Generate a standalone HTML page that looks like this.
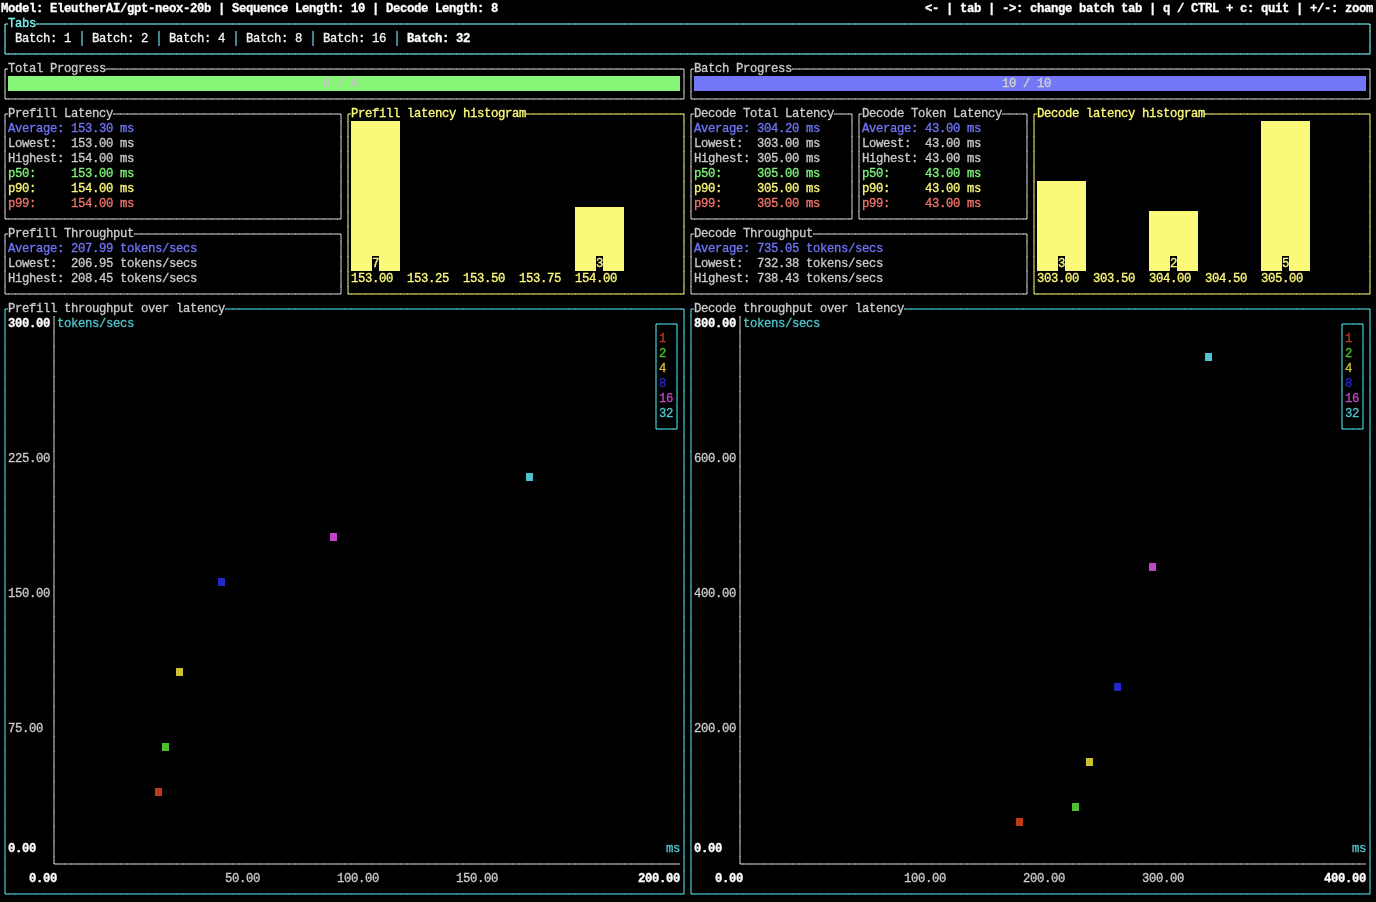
<!DOCTYPE html>
<html lang="en"><head><meta charset="utf-8"><title>text-generation-benchmark</title><style>
html,body{margin:0;padding:0;background:#000;}
body{width:1376px;height:902px;overflow:hidden;position:relative;font-family:"Liberation Mono",monospace;}
#s{position:absolute;left:0;top:0;width:1376px;height:902px;overflow:hidden;will-change:transform;}
.t{position:absolute;display:block;height:15px;line-height:15px;font-size:12.25px;white-space:pre;letter-spacing:-0.35px;font-weight:400;font-family:"Liberation Mono",monospace;-webkit-text-stroke:0.32px currentColor;}
.t.b{font-weight:700;-webkit-text-stroke:0.3px currentColor;}
i{position:absolute;display:block;}
</style></head><body><div id="s">
<span class="t b" style="left:1px;top:2px;color:#ffffff;">Model: EleutherAI/gpt-neox-20b | Sequence Length: 10 | Decode Length: 8</span>
<span class="t b" style="left:925px;top:2px;color:#ffffff;">&lt;- | tab | -&gt;: change batch tab | q / CTRL + c: quit | +/-: zoom</span>
<i style="left:36px;top:23px;width:1333px;height:2px;background:repeating-linear-gradient(90deg,#58a2a7 0,#58a2a7 1px,#40858a 1px,#40858a 7px);background-position:0px 0;background-size:7px 2px;"></i>
<i style="left:6px;top:23px;width:2px;height:2px;background:#40858a;"></i>
<i style="left:6px;top:53px;width:1363px;height:2px;background:repeating-linear-gradient(90deg,#58a2a7 0,#58a2a7 1px,#40858a 1px,#40858a 7px);background-position:-5px 0;background-size:7px 2px;"></i>
<i style="left:4px;top:25px;width:2px;height:28px;background:repeating-linear-gradient(180deg,#58a2a7 0,#58a2a7 1px,#40858a 1px,#40858a 15px);background-position:0 -9px;background-size:2px 15px;"></i>
<i style="left:1369px;top:25px;width:2px;height:28px;background:repeating-linear-gradient(180deg,#58a2a7 0,#58a2a7 1px,#40858a 1px,#40858a 15px);background-position:0 -9px;background-size:2px 15px;"></i>
<i style="left:5px;top:24px;width:1px;height:1px;background:#7fe0e6;"></i>
<i style="left:4px;top:24px;width:1px;height:1px;background:#40858a;"></i>
<i style="left:5px;top:23px;width:1px;height:1px;background:#40858a;"></i>
<i style="left:1369px;top:24px;width:1px;height:1px;background:#7fe0e6;"></i>
<i style="left:1370px;top:24px;width:1px;height:1px;background:#40858a;"></i>
<i style="left:1369px;top:23px;width:1px;height:1px;background:#40858a;"></i>
<i style="left:5px;top:53px;width:1px;height:1px;background:#7fe0e6;"></i>
<i style="left:4px;top:53px;width:1px;height:1px;background:#40858a;"></i>
<i style="left:5px;top:54px;width:1px;height:1px;background:#40858a;"></i>
<i style="left:1369px;top:53px;width:1px;height:1px;background:#7fe0e6;"></i>
<i style="left:1370px;top:53px;width:1px;height:1px;background:#40858a;"></i>
<i style="left:1369px;top:54px;width:1px;height:1px;background:#40858a;"></i>
<span class="t" style="left:8px;top:17px;color:#7ff5f8;">Tabs</span>
<span class="t" style="left:15px;top:32px;color:#f2f2f2;">Batch: 1</span>
<i style="left:81px;top:31px;width:2px;height:15px;background:repeating-linear-gradient(180deg,#40858a 0,#40858a 1px,#40858a 1px,#40858a 15px);background-position:0 0px;background-size:2px 15px;"></i>
<span class="t" style="left:92px;top:32px;color:#f2f2f2;">Batch: 2</span>
<i style="left:158px;top:31px;width:2px;height:15px;background:repeating-linear-gradient(180deg,#40858a 0,#40858a 1px,#40858a 1px,#40858a 15px);background-position:0 0px;background-size:2px 15px;"></i>
<span class="t" style="left:169px;top:32px;color:#f2f2f2;">Batch: 4</span>
<i style="left:235px;top:31px;width:2px;height:15px;background:repeating-linear-gradient(180deg,#40858a 0,#40858a 1px,#40858a 1px,#40858a 15px);background-position:0 0px;background-size:2px 15px;"></i>
<span class="t" style="left:246px;top:32px;color:#f2f2f2;">Batch: 8</span>
<i style="left:312px;top:31px;width:2px;height:15px;background:repeating-linear-gradient(180deg,#40858a 0,#40858a 1px,#40858a 1px,#40858a 15px);background-position:0 0px;background-size:2px 15px;"></i>
<span class="t" style="left:323px;top:32px;color:#f2f2f2;">Batch: 16</span>
<i style="left:396px;top:31px;width:2px;height:15px;background:repeating-linear-gradient(180deg,#40858a 0,#40858a 1px,#40858a 1px,#40858a 15px);background-position:0 0px;background-size:2px 15px;"></i>
<span class="t b" style="left:407px;top:32px;color:#ffffff;">Batch: 32</span>
<i style="left:106px;top:68px;width:577px;height:2px;background:repeating-linear-gradient(90deg,#8e8e8e 0,#8e8e8e 1px,#6a6a6a 1px,#6a6a6a 7px);background-position:0px 0;background-size:7px 2px;"></i>
<i style="left:6px;top:68px;width:2px;height:2px;background:#6a6a6a;"></i>
<i style="left:6px;top:98px;width:677px;height:2px;background:repeating-linear-gradient(90deg,#8e8e8e 0,#8e8e8e 1px,#6a6a6a 1px,#6a6a6a 7px);background-position:-5px 0;background-size:7px 2px;"></i>
<i style="left:4px;top:70px;width:2px;height:28px;background:repeating-linear-gradient(180deg,#8e8e8e 0,#8e8e8e 1px,#6a6a6a 1px,#6a6a6a 15px);background-position:0 -9px;background-size:2px 15px;"></i>
<i style="left:683px;top:70px;width:2px;height:28px;background:repeating-linear-gradient(180deg,#8e8e8e 0,#8e8e8e 1px,#6a6a6a 1px,#6a6a6a 15px);background-position:0 -9px;background-size:2px 15px;"></i>
<i style="left:5px;top:69px;width:1px;height:1px;background:#cfcfcf;"></i>
<i style="left:4px;top:69px;width:1px;height:1px;background:#6a6a6a;"></i>
<i style="left:5px;top:68px;width:1px;height:1px;background:#6a6a6a;"></i>
<i style="left:683px;top:69px;width:1px;height:1px;background:#cfcfcf;"></i>
<i style="left:684px;top:69px;width:1px;height:1px;background:#6a6a6a;"></i>
<i style="left:683px;top:68px;width:1px;height:1px;background:#6a6a6a;"></i>
<i style="left:5px;top:98px;width:1px;height:1px;background:#cfcfcf;"></i>
<i style="left:4px;top:98px;width:1px;height:1px;background:#6a6a6a;"></i>
<i style="left:5px;top:99px;width:1px;height:1px;background:#6a6a6a;"></i>
<i style="left:683px;top:98px;width:1px;height:1px;background:#cfcfcf;"></i>
<i style="left:684px;top:98px;width:1px;height:1px;background:#6a6a6a;"></i>
<i style="left:683px;top:99px;width:1px;height:1px;background:#6a6a6a;"></i>
<span class="t" style="left:8px;top:62px;color:#c9c9c9;">Total Progress</span>
<i style="left:8px;top:76px;width:672px;height:15px;background:#86f578;"></i>
<span class="t" style="left:323px;top:77px;color:#c4c4c4;">6 / 6</span>
<i style="left:792px;top:68px;width:577px;height:2px;background:repeating-linear-gradient(90deg,#8e8e8e 0,#8e8e8e 1px,#6a6a6a 1px,#6a6a6a 7px);background-position:0px 0;background-size:7px 2px;"></i>
<i style="left:692px;top:68px;width:2px;height:2px;background:#6a6a6a;"></i>
<i style="left:692px;top:98px;width:677px;height:2px;background:repeating-linear-gradient(90deg,#8e8e8e 0,#8e8e8e 1px,#6a6a6a 1px,#6a6a6a 7px);background-position:-5px 0;background-size:7px 2px;"></i>
<i style="left:690px;top:70px;width:2px;height:28px;background:repeating-linear-gradient(180deg,#8e8e8e 0,#8e8e8e 1px,#6a6a6a 1px,#6a6a6a 15px);background-position:0 -9px;background-size:2px 15px;"></i>
<i style="left:1369px;top:70px;width:2px;height:28px;background:repeating-linear-gradient(180deg,#8e8e8e 0,#8e8e8e 1px,#6a6a6a 1px,#6a6a6a 15px);background-position:0 -9px;background-size:2px 15px;"></i>
<i style="left:691px;top:69px;width:1px;height:1px;background:#cfcfcf;"></i>
<i style="left:690px;top:69px;width:1px;height:1px;background:#6a6a6a;"></i>
<i style="left:691px;top:68px;width:1px;height:1px;background:#6a6a6a;"></i>
<i style="left:1369px;top:69px;width:1px;height:1px;background:#cfcfcf;"></i>
<i style="left:1370px;top:69px;width:1px;height:1px;background:#6a6a6a;"></i>
<i style="left:1369px;top:68px;width:1px;height:1px;background:#6a6a6a;"></i>
<i style="left:691px;top:98px;width:1px;height:1px;background:#cfcfcf;"></i>
<i style="left:690px;top:98px;width:1px;height:1px;background:#6a6a6a;"></i>
<i style="left:691px;top:99px;width:1px;height:1px;background:#6a6a6a;"></i>
<i style="left:1369px;top:98px;width:1px;height:1px;background:#cfcfcf;"></i>
<i style="left:1370px;top:98px;width:1px;height:1px;background:#6a6a6a;"></i>
<i style="left:1369px;top:99px;width:1px;height:1px;background:#6a6a6a;"></i>
<span class="t" style="left:694px;top:62px;color:#c9c9c9;">Batch Progress</span>
<i style="left:694px;top:76px;width:672px;height:15px;background:#7276f8;"></i>
<span class="t" style="left:1002px;top:77px;color:#d4d4c4;">10 / 10</span>
<i style="left:113px;top:113px;width:227px;height:2px;background:repeating-linear-gradient(90deg,#8e8e8e 0,#8e8e8e 1px,#6a6a6a 1px,#6a6a6a 7px);background-position:0px 0;background-size:7px 2px;"></i>
<i style="left:6px;top:113px;width:2px;height:2px;background:#6a6a6a;"></i>
<i style="left:6px;top:218px;width:334px;height:2px;background:repeating-linear-gradient(90deg,#8e8e8e 0,#8e8e8e 1px,#6a6a6a 1px,#6a6a6a 7px);background-position:-5px 0;background-size:7px 2px;"></i>
<i style="left:4px;top:115px;width:2px;height:103px;background:repeating-linear-gradient(180deg,#8e8e8e 0,#8e8e8e 1px,#6a6a6a 1px,#6a6a6a 15px);background-position:0 -9px;background-size:2px 15px;"></i>
<i style="left:340px;top:115px;width:2px;height:103px;background:repeating-linear-gradient(180deg,#8e8e8e 0,#8e8e8e 1px,#6a6a6a 1px,#6a6a6a 15px);background-position:0 -9px;background-size:2px 15px;"></i>
<i style="left:5px;top:114px;width:1px;height:1px;background:#cfcfcf;"></i>
<i style="left:4px;top:114px;width:1px;height:1px;background:#6a6a6a;"></i>
<i style="left:5px;top:113px;width:1px;height:1px;background:#6a6a6a;"></i>
<i style="left:340px;top:114px;width:1px;height:1px;background:#cfcfcf;"></i>
<i style="left:341px;top:114px;width:1px;height:1px;background:#6a6a6a;"></i>
<i style="left:340px;top:113px;width:1px;height:1px;background:#6a6a6a;"></i>
<i style="left:5px;top:218px;width:1px;height:1px;background:#cfcfcf;"></i>
<i style="left:4px;top:218px;width:1px;height:1px;background:#6a6a6a;"></i>
<i style="left:5px;top:219px;width:1px;height:1px;background:#6a6a6a;"></i>
<i style="left:340px;top:218px;width:1px;height:1px;background:#cfcfcf;"></i>
<i style="left:341px;top:218px;width:1px;height:1px;background:#6a6a6a;"></i>
<i style="left:340px;top:219px;width:1px;height:1px;background:#6a6a6a;"></i>
<span class="t" style="left:8px;top:107px;color:#c9c9c9;">Prefill Latency</span>
<span class="t" style="left:8px;top:122px;color:#6f74f6;">Average: 153.30 ms</span>
<span class="t" style="left:8px;top:137px;color:#c9c9c9;">Lowest:  153.00 ms</span>
<span class="t" style="left:8px;top:152px;color:#c9c9c9;">Highest: 154.00 ms</span>
<span class="t" style="left:8px;top:167px;color:#7df277;">p50:     153.00 ms</span>
<span class="t" style="left:8px;top:182px;color:#f7f577;">p90:     154.00 ms</span>
<span class="t" style="left:8px;top:197px;color:#f0746a;">p99:     154.00 ms</span>
<i style="left:834px;top:113px;width:17px;height:2px;background:repeating-linear-gradient(90deg,#8e8e8e 0,#8e8e8e 1px,#6a6a6a 1px,#6a6a6a 7px);background-position:0px 0;background-size:7px 2px;"></i>
<i style="left:692px;top:113px;width:2px;height:2px;background:#6a6a6a;"></i>
<i style="left:692px;top:218px;width:159px;height:2px;background:repeating-linear-gradient(90deg,#8e8e8e 0,#8e8e8e 1px,#6a6a6a 1px,#6a6a6a 7px);background-position:-5px 0;background-size:7px 2px;"></i>
<i style="left:690px;top:115px;width:2px;height:103px;background:repeating-linear-gradient(180deg,#8e8e8e 0,#8e8e8e 1px,#6a6a6a 1px,#6a6a6a 15px);background-position:0 -9px;background-size:2px 15px;"></i>
<i style="left:851px;top:115px;width:2px;height:103px;background:repeating-linear-gradient(180deg,#8e8e8e 0,#8e8e8e 1px,#6a6a6a 1px,#6a6a6a 15px);background-position:0 -9px;background-size:2px 15px;"></i>
<i style="left:691px;top:114px;width:1px;height:1px;background:#cfcfcf;"></i>
<i style="left:690px;top:114px;width:1px;height:1px;background:#6a6a6a;"></i>
<i style="left:691px;top:113px;width:1px;height:1px;background:#6a6a6a;"></i>
<i style="left:851px;top:114px;width:1px;height:1px;background:#cfcfcf;"></i>
<i style="left:852px;top:114px;width:1px;height:1px;background:#6a6a6a;"></i>
<i style="left:851px;top:113px;width:1px;height:1px;background:#6a6a6a;"></i>
<i style="left:691px;top:218px;width:1px;height:1px;background:#cfcfcf;"></i>
<i style="left:690px;top:218px;width:1px;height:1px;background:#6a6a6a;"></i>
<i style="left:691px;top:219px;width:1px;height:1px;background:#6a6a6a;"></i>
<i style="left:851px;top:218px;width:1px;height:1px;background:#cfcfcf;"></i>
<i style="left:852px;top:218px;width:1px;height:1px;background:#6a6a6a;"></i>
<i style="left:851px;top:219px;width:1px;height:1px;background:#6a6a6a;"></i>
<span class="t" style="left:694px;top:107px;color:#c9c9c9;">Decode Total Latency</span>
<span class="t" style="left:694px;top:122px;color:#6f74f6;">Average: 304.20 ms</span>
<span class="t" style="left:694px;top:137px;color:#c9c9c9;">Lowest:  303.00 ms</span>
<span class="t" style="left:694px;top:152px;color:#c9c9c9;">Highest: 305.00 ms</span>
<span class="t" style="left:694px;top:167px;color:#7df277;">p50:     305.00 ms</span>
<span class="t" style="left:694px;top:182px;color:#f7f577;">p90:     305.00 ms</span>
<span class="t" style="left:694px;top:197px;color:#f0746a;">p99:     305.00 ms</span>
<i style="left:1002px;top:113px;width:24px;height:2px;background:repeating-linear-gradient(90deg,#8e8e8e 0,#8e8e8e 1px,#6a6a6a 1px,#6a6a6a 7px);background-position:0px 0;background-size:7px 2px;"></i>
<i style="left:860px;top:113px;width:2px;height:2px;background:#6a6a6a;"></i>
<i style="left:860px;top:218px;width:166px;height:2px;background:repeating-linear-gradient(90deg,#8e8e8e 0,#8e8e8e 1px,#6a6a6a 1px,#6a6a6a 7px);background-position:-5px 0;background-size:7px 2px;"></i>
<i style="left:858px;top:115px;width:2px;height:103px;background:repeating-linear-gradient(180deg,#8e8e8e 0,#8e8e8e 1px,#6a6a6a 1px,#6a6a6a 15px);background-position:0 -9px;background-size:2px 15px;"></i>
<i style="left:1026px;top:115px;width:2px;height:103px;background:repeating-linear-gradient(180deg,#8e8e8e 0,#8e8e8e 1px,#6a6a6a 1px,#6a6a6a 15px);background-position:0 -9px;background-size:2px 15px;"></i>
<i style="left:859px;top:114px;width:1px;height:1px;background:#cfcfcf;"></i>
<i style="left:858px;top:114px;width:1px;height:1px;background:#6a6a6a;"></i>
<i style="left:859px;top:113px;width:1px;height:1px;background:#6a6a6a;"></i>
<i style="left:1026px;top:114px;width:1px;height:1px;background:#cfcfcf;"></i>
<i style="left:1027px;top:114px;width:1px;height:1px;background:#6a6a6a;"></i>
<i style="left:1026px;top:113px;width:1px;height:1px;background:#6a6a6a;"></i>
<i style="left:859px;top:218px;width:1px;height:1px;background:#cfcfcf;"></i>
<i style="left:858px;top:218px;width:1px;height:1px;background:#6a6a6a;"></i>
<i style="left:859px;top:219px;width:1px;height:1px;background:#6a6a6a;"></i>
<i style="left:1026px;top:218px;width:1px;height:1px;background:#cfcfcf;"></i>
<i style="left:1027px;top:218px;width:1px;height:1px;background:#6a6a6a;"></i>
<i style="left:1026px;top:219px;width:1px;height:1px;background:#6a6a6a;"></i>
<span class="t" style="left:862px;top:107px;color:#c9c9c9;">Decode Token Latency</span>
<span class="t" style="left:862px;top:122px;color:#6f74f6;">Average: 43.00 ms</span>
<span class="t" style="left:862px;top:137px;color:#c9c9c9;">Lowest:  43.00 ms</span>
<span class="t" style="left:862px;top:152px;color:#c9c9c9;">Highest: 43.00 ms</span>
<span class="t" style="left:862px;top:167px;color:#7df277;">p50:     43.00 ms</span>
<span class="t" style="left:862px;top:182px;color:#f7f577;">p90:     43.00 ms</span>
<span class="t" style="left:862px;top:197px;color:#f0746a;">p99:     43.00 ms</span>
<i style="left:134px;top:233px;width:206px;height:2px;background:repeating-linear-gradient(90deg,#8e8e8e 0,#8e8e8e 1px,#6a6a6a 1px,#6a6a6a 7px);background-position:0px 0;background-size:7px 2px;"></i>
<i style="left:6px;top:233px;width:2px;height:2px;background:#6a6a6a;"></i>
<i style="left:6px;top:293px;width:334px;height:2px;background:repeating-linear-gradient(90deg,#8e8e8e 0,#8e8e8e 1px,#6a6a6a 1px,#6a6a6a 7px);background-position:-5px 0;background-size:7px 2px;"></i>
<i style="left:4px;top:235px;width:2px;height:58px;background:repeating-linear-gradient(180deg,#8e8e8e 0,#8e8e8e 1px,#6a6a6a 1px,#6a6a6a 15px);background-position:0 -9px;background-size:2px 15px;"></i>
<i style="left:340px;top:235px;width:2px;height:58px;background:repeating-linear-gradient(180deg,#8e8e8e 0,#8e8e8e 1px,#6a6a6a 1px,#6a6a6a 15px);background-position:0 -9px;background-size:2px 15px;"></i>
<i style="left:5px;top:234px;width:1px;height:1px;background:#cfcfcf;"></i>
<i style="left:4px;top:234px;width:1px;height:1px;background:#6a6a6a;"></i>
<i style="left:5px;top:233px;width:1px;height:1px;background:#6a6a6a;"></i>
<i style="left:340px;top:234px;width:1px;height:1px;background:#cfcfcf;"></i>
<i style="left:341px;top:234px;width:1px;height:1px;background:#6a6a6a;"></i>
<i style="left:340px;top:233px;width:1px;height:1px;background:#6a6a6a;"></i>
<i style="left:5px;top:293px;width:1px;height:1px;background:#cfcfcf;"></i>
<i style="left:4px;top:293px;width:1px;height:1px;background:#6a6a6a;"></i>
<i style="left:5px;top:294px;width:1px;height:1px;background:#6a6a6a;"></i>
<i style="left:340px;top:293px;width:1px;height:1px;background:#cfcfcf;"></i>
<i style="left:341px;top:293px;width:1px;height:1px;background:#6a6a6a;"></i>
<i style="left:340px;top:294px;width:1px;height:1px;background:#6a6a6a;"></i>
<span class="t" style="left:8px;top:227px;color:#c9c9c9;">Prefill Throughput</span>
<span class="t" style="left:8px;top:242px;color:#6f74f6;">Average: 207.99 tokens/secs</span>
<span class="t" style="left:8px;top:257px;color:#c9c9c9;">Lowest:  206.95 tokens/secs</span>
<span class="t" style="left:8px;top:272px;color:#c9c9c9;">Highest: 208.45 tokens/secs</span>
<i style="left:813px;top:233px;width:213px;height:2px;background:repeating-linear-gradient(90deg,#8e8e8e 0,#8e8e8e 1px,#6a6a6a 1px,#6a6a6a 7px);background-position:0px 0;background-size:7px 2px;"></i>
<i style="left:692px;top:233px;width:2px;height:2px;background:#6a6a6a;"></i>
<i style="left:692px;top:293px;width:334px;height:2px;background:repeating-linear-gradient(90deg,#8e8e8e 0,#8e8e8e 1px,#6a6a6a 1px,#6a6a6a 7px);background-position:-5px 0;background-size:7px 2px;"></i>
<i style="left:690px;top:235px;width:2px;height:58px;background:repeating-linear-gradient(180deg,#8e8e8e 0,#8e8e8e 1px,#6a6a6a 1px,#6a6a6a 15px);background-position:0 -9px;background-size:2px 15px;"></i>
<i style="left:1026px;top:235px;width:2px;height:58px;background:repeating-linear-gradient(180deg,#8e8e8e 0,#8e8e8e 1px,#6a6a6a 1px,#6a6a6a 15px);background-position:0 -9px;background-size:2px 15px;"></i>
<i style="left:691px;top:234px;width:1px;height:1px;background:#cfcfcf;"></i>
<i style="left:690px;top:234px;width:1px;height:1px;background:#6a6a6a;"></i>
<i style="left:691px;top:233px;width:1px;height:1px;background:#6a6a6a;"></i>
<i style="left:1026px;top:234px;width:1px;height:1px;background:#cfcfcf;"></i>
<i style="left:1027px;top:234px;width:1px;height:1px;background:#6a6a6a;"></i>
<i style="left:1026px;top:233px;width:1px;height:1px;background:#6a6a6a;"></i>
<i style="left:691px;top:293px;width:1px;height:1px;background:#cfcfcf;"></i>
<i style="left:690px;top:293px;width:1px;height:1px;background:#6a6a6a;"></i>
<i style="left:691px;top:294px;width:1px;height:1px;background:#6a6a6a;"></i>
<i style="left:1026px;top:293px;width:1px;height:1px;background:#cfcfcf;"></i>
<i style="left:1027px;top:293px;width:1px;height:1px;background:#6a6a6a;"></i>
<i style="left:1026px;top:294px;width:1px;height:1px;background:#6a6a6a;"></i>
<span class="t" style="left:694px;top:227px;color:#c9c9c9;">Decode Throughput</span>
<span class="t" style="left:694px;top:242px;color:#6f74f6;">Average: 735.05 tokens/secs</span>
<span class="t" style="left:694px;top:257px;color:#c9c9c9;">Lowest:  732.38 tokens/secs</span>
<span class="t" style="left:694px;top:272px;color:#c9c9c9;">Highest: 738.43 tokens/secs</span>
<i style="left:526px;top:113px;width:157px;height:2px;background:repeating-linear-gradient(90deg,#a3a148 0,#a3a148 1px,#7f7e38 1px,#7f7e38 7px);background-position:0px 0;background-size:7px 2px;"></i>
<i style="left:349px;top:113px;width:2px;height:2px;background:#7f7e38;"></i>
<i style="left:349px;top:293px;width:334px;height:2px;background:repeating-linear-gradient(90deg,#a3a148 0,#a3a148 1px,#7f7e38 1px,#7f7e38 7px);background-position:-5px 0;background-size:7px 2px;"></i>
<i style="left:347px;top:115px;width:2px;height:178px;background:repeating-linear-gradient(180deg,#a3a148 0,#a3a148 1px,#7f7e38 1px,#7f7e38 15px);background-position:0 -9px;background-size:2px 15px;"></i>
<i style="left:683px;top:115px;width:2px;height:178px;background:repeating-linear-gradient(180deg,#a3a148 0,#a3a148 1px,#7f7e38 1px,#7f7e38 15px);background-position:0 -9px;background-size:2px 15px;"></i>
<i style="left:348px;top:114px;width:1px;height:1px;background:#e6e464;"></i>
<i style="left:347px;top:114px;width:1px;height:1px;background:#7f7e38;"></i>
<i style="left:348px;top:113px;width:1px;height:1px;background:#7f7e38;"></i>
<i style="left:683px;top:114px;width:1px;height:1px;background:#e6e464;"></i>
<i style="left:684px;top:114px;width:1px;height:1px;background:#7f7e38;"></i>
<i style="left:683px;top:113px;width:1px;height:1px;background:#7f7e38;"></i>
<i style="left:348px;top:293px;width:1px;height:1px;background:#e6e464;"></i>
<i style="left:347px;top:293px;width:1px;height:1px;background:#7f7e38;"></i>
<i style="left:348px;top:294px;width:1px;height:1px;background:#7f7e38;"></i>
<i style="left:683px;top:293px;width:1px;height:1px;background:#e6e464;"></i>
<i style="left:684px;top:293px;width:1px;height:1px;background:#7f7e38;"></i>
<i style="left:683px;top:294px;width:1px;height:1px;background:#7f7e38;"></i>
<span class="t" style="left:351px;top:107px;color:#fbf978;">Prefill latency histogram</span>
<i style="left:351px;top:121.0px;width:49px;height:150.0px;background:#fbf978;"></i>
<i style="left:372px;top:256px;width:7px;height:15px;background:#000;"></i>
<span class="t" style="left:372px;top:257px;color:#fbf978;">7</span>
<span class="t" style="left:351px;top:272px;color:#fbf978;">153.00</span>
<span class="t" style="left:407px;top:272px;color:#fbf978;">153.25</span>
<span class="t" style="left:463px;top:272px;color:#fbf978;">153.50</span>
<span class="t" style="left:519px;top:272px;color:#fbf978;">153.75</span>
<i style="left:575px;top:207.25px;width:49px;height:63.75px;background:#fbf978;"></i>
<i style="left:596px;top:256px;width:7px;height:15px;background:#000;"></i>
<span class="t" style="left:596px;top:257px;color:#fbf978;">3</span>
<span class="t" style="left:575px;top:272px;color:#fbf978;">154.00</span>
<i style="left:1205px;top:113px;width:164px;height:2px;background:repeating-linear-gradient(90deg,#a3a148 0,#a3a148 1px,#7f7e38 1px,#7f7e38 7px);background-position:0px 0;background-size:7px 2px;"></i>
<i style="left:1035px;top:113px;width:2px;height:2px;background:#7f7e38;"></i>
<i style="left:1035px;top:293px;width:334px;height:2px;background:repeating-linear-gradient(90deg,#a3a148 0,#a3a148 1px,#7f7e38 1px,#7f7e38 7px);background-position:-5px 0;background-size:7px 2px;"></i>
<i style="left:1033px;top:115px;width:2px;height:178px;background:repeating-linear-gradient(180deg,#a3a148 0,#a3a148 1px,#7f7e38 1px,#7f7e38 15px);background-position:0 -9px;background-size:2px 15px;"></i>
<i style="left:1369px;top:115px;width:2px;height:178px;background:repeating-linear-gradient(180deg,#a3a148 0,#a3a148 1px,#7f7e38 1px,#7f7e38 15px);background-position:0 -9px;background-size:2px 15px;"></i>
<i style="left:1034px;top:114px;width:1px;height:1px;background:#e6e464;"></i>
<i style="left:1033px;top:114px;width:1px;height:1px;background:#7f7e38;"></i>
<i style="left:1034px;top:113px;width:1px;height:1px;background:#7f7e38;"></i>
<i style="left:1369px;top:114px;width:1px;height:1px;background:#e6e464;"></i>
<i style="left:1370px;top:114px;width:1px;height:1px;background:#7f7e38;"></i>
<i style="left:1369px;top:113px;width:1px;height:1px;background:#7f7e38;"></i>
<i style="left:1034px;top:293px;width:1px;height:1px;background:#e6e464;"></i>
<i style="left:1033px;top:293px;width:1px;height:1px;background:#7f7e38;"></i>
<i style="left:1034px;top:294px;width:1px;height:1px;background:#7f7e38;"></i>
<i style="left:1369px;top:293px;width:1px;height:1px;background:#e6e464;"></i>
<i style="left:1370px;top:293px;width:1px;height:1px;background:#7f7e38;"></i>
<i style="left:1369px;top:294px;width:1px;height:1px;background:#7f7e38;"></i>
<span class="t" style="left:1037px;top:107px;color:#fbf978;">Decode latency histogram</span>
<i style="left:1037px;top:181.0px;width:49px;height:90.0px;background:#fbf978;"></i>
<i style="left:1058px;top:256px;width:7px;height:15px;background:#000;"></i>
<span class="t" style="left:1058px;top:257px;color:#fbf978;">3</span>
<span class="t" style="left:1037px;top:272px;color:#fbf978;">303.00</span>
<span class="t" style="left:1093px;top:272px;color:#fbf978;">303.50</span>
<i style="left:1149px;top:211.0px;width:49px;height:60.0px;background:#fbf978;"></i>
<i style="left:1170px;top:256px;width:7px;height:15px;background:#000;"></i>
<span class="t" style="left:1170px;top:257px;color:#fbf978;">2</span>
<span class="t" style="left:1149px;top:272px;color:#fbf978;">304.00</span>
<span class="t" style="left:1205px;top:272px;color:#fbf978;">304.50</span>
<i style="left:1261px;top:121.0px;width:49px;height:150.0px;background:#fbf978;"></i>
<i style="left:1282px;top:256px;width:7px;height:15px;background:#000;"></i>
<span class="t" style="left:1282px;top:257px;color:#fbf978;">5</span>
<span class="t" style="left:1261px;top:272px;color:#fbf978;">305.00</span>
<i style="left:225px;top:308px;width:458px;height:2px;background:repeating-linear-gradient(90deg,#359096 0,#359096 1px,#28787e 1px,#28787e 7px);background-position:0px 0;background-size:7px 2px;"></i>
<i style="left:6px;top:308px;width:2px;height:2px;background:#28787e;"></i>
<i style="left:6px;top:893px;width:677px;height:2px;background:repeating-linear-gradient(90deg,#359096 0,#359096 1px,#28787e 1px,#28787e 7px);background-position:-5px 0;background-size:7px 2px;"></i>
<i style="left:4px;top:310px;width:2px;height:583px;background:repeating-linear-gradient(180deg,#359096 0,#359096 1px,#28787e 1px,#28787e 15px);background-position:0 -9px;background-size:2px 15px;"></i>
<i style="left:683px;top:310px;width:2px;height:583px;background:repeating-linear-gradient(180deg,#359096 0,#359096 1px,#28787e 1px,#28787e 15px);background-position:0 -9px;background-size:2px 15px;"></i>
<i style="left:5px;top:309px;width:1px;height:1px;background:#55c8d0;"></i>
<i style="left:4px;top:309px;width:1px;height:1px;background:#28787e;"></i>
<i style="left:5px;top:308px;width:1px;height:1px;background:#28787e;"></i>
<i style="left:683px;top:309px;width:1px;height:1px;background:#55c8d0;"></i>
<i style="left:684px;top:309px;width:1px;height:1px;background:#28787e;"></i>
<i style="left:683px;top:308px;width:1px;height:1px;background:#28787e;"></i>
<i style="left:5px;top:893px;width:1px;height:1px;background:#55c8d0;"></i>
<i style="left:4px;top:893px;width:1px;height:1px;background:#28787e;"></i>
<i style="left:5px;top:894px;width:1px;height:1px;background:#28787e;"></i>
<i style="left:683px;top:893px;width:1px;height:1px;background:#55c8d0;"></i>
<i style="left:684px;top:893px;width:1px;height:1px;background:#28787e;"></i>
<i style="left:683px;top:894px;width:1px;height:1px;background:#28787e;"></i>
<span class="t" style="left:8px;top:302px;color:#c9c9c9;">Prefill throughput over latency</span>
<span class="t b" style="left:8px;top:317px;color:#ffffff;">300.00</span>
<span class="t" style="left:8px;top:452px;color:#c9c9c9;">225.00</span>
<span class="t" style="left:8px;top:587px;color:#c9c9c9;">150.00</span>
<span class="t" style="left:8px;top:722px;color:#c9c9c9;">75.00</span>
<span class="t b" style="left:8px;top:842px;color:#ffffff;">0.00</span>
<i style="left:53px;top:316px;width:2px;height:547px;background:repeating-linear-gradient(180deg,#8e8e8e 0,#8e8e8e 1px,#6a6a6a 1px,#6a6a6a 15px);background-position:0 0px;background-size:2px 15px;"></i>
<i style="left:55px;top:863px;width:625px;height:2px;background:repeating-linear-gradient(90deg,#8e8e8e 0,#8e8e8e 1px,#6a6a6a 1px,#6a6a6a 7px);background-position:-5px 0;background-size:7px 2px;"></i>
<i style="left:54px;top:863px;width:1px;height:1px;background:#cfcfcf;"></i>
<i style="left:53px;top:863px;width:1px;height:1px;background:#6a6a6a;"></i>
<i style="left:54px;top:864px;width:1px;height:1px;background:#6a6a6a;"></i>
<span class="t" style="left:57px;top:317px;color:#4fc4cc;">tokens/secs</span>
<span class="t" style="left:666px;top:842px;color:#4fc4cc;">ms</span>
<span class="t b" style="left:29px;top:872px;color:#ffffff;">0.00</span>
<span class="t" style="left:225px;top:872px;color:#c9c9c9;">50.00</span>
<span class="t" style="left:337px;top:872px;color:#c9c9c9;">100.00</span>
<span class="t" style="left:456px;top:872px;color:#c9c9c9;">150.00</span>
<span class="t b" style="left:638px;top:872px;color:#ffffff;">200.00</span>
<i style="left:657px;top:323px;width:19px;height:2px;background:repeating-linear-gradient(90deg,#359096 0,#359096 1px,#28787e 1px,#28787e 7px);background-position:-5px 0;background-size:7px 2px;"></i>
<i style="left:657px;top:428px;width:19px;height:2px;background:repeating-linear-gradient(90deg,#359096 0,#359096 1px,#28787e 1px,#28787e 7px);background-position:-5px 0;background-size:7px 2px;"></i>
<i style="left:655px;top:325px;width:2px;height:103px;background:repeating-linear-gradient(180deg,#359096 0,#359096 1px,#28787e 1px,#28787e 15px);background-position:0 -9px;background-size:2px 15px;"></i>
<i style="left:676px;top:325px;width:2px;height:103px;background:repeating-linear-gradient(180deg,#359096 0,#359096 1px,#28787e 1px,#28787e 15px);background-position:0 -9px;background-size:2px 15px;"></i>
<i style="left:656px;top:324px;width:1px;height:1px;background:#55c8d0;"></i>
<i style="left:655px;top:324px;width:1px;height:1px;background:#28787e;"></i>
<i style="left:656px;top:323px;width:1px;height:1px;background:#28787e;"></i>
<i style="left:676px;top:324px;width:1px;height:1px;background:#55c8d0;"></i>
<i style="left:677px;top:324px;width:1px;height:1px;background:#28787e;"></i>
<i style="left:676px;top:323px;width:1px;height:1px;background:#28787e;"></i>
<i style="left:656px;top:428px;width:1px;height:1px;background:#55c8d0;"></i>
<i style="left:655px;top:428px;width:1px;height:1px;background:#28787e;"></i>
<i style="left:656px;top:429px;width:1px;height:1px;background:#28787e;"></i>
<i style="left:676px;top:428px;width:1px;height:1px;background:#55c8d0;"></i>
<i style="left:677px;top:428px;width:1px;height:1px;background:#28787e;"></i>
<i style="left:676px;top:429px;width:1px;height:1px;background:#28787e;"></i>
<span class="t" style="left:659px;top:332px;color:#bf3a18;">1</span>
<span class="t" style="left:659px;top:347px;color:#4ec030;">2</span>
<span class="t" style="left:659px;top:362px;color:#cbc02e;">4</span>
<span class="t" style="left:659px;top:377px;color:#2428c8;">8</span>
<span class="t" style="left:659px;top:392px;color:#c444c8;">16</span>
<span class="t" style="left:659px;top:407px;color:#50c4cc;">32</span>
<i style="left:155px;top:788px;width:7px;height:8px;background:#bf3a18;"></i>
<i style="left:162px;top:743px;width:7px;height:8px;background:#4ec030;"></i>
<i style="left:176px;top:668px;width:7px;height:8px;background:#cbc02e;"></i>
<i style="left:218px;top:578px;width:7px;height:8px;background:#2428c8;"></i>
<i style="left:330px;top:533px;width:7px;height:8px;background:#c444c8;"></i>
<i style="left:526px;top:473px;width:7px;height:8px;background:#50c4cc;"></i>
<i style="left:904px;top:308px;width:465px;height:2px;background:repeating-linear-gradient(90deg,#359096 0,#359096 1px,#28787e 1px,#28787e 7px);background-position:0px 0;background-size:7px 2px;"></i>
<i style="left:692px;top:308px;width:2px;height:2px;background:#28787e;"></i>
<i style="left:692px;top:893px;width:677px;height:2px;background:repeating-linear-gradient(90deg,#359096 0,#359096 1px,#28787e 1px,#28787e 7px);background-position:-5px 0;background-size:7px 2px;"></i>
<i style="left:690px;top:310px;width:2px;height:583px;background:repeating-linear-gradient(180deg,#359096 0,#359096 1px,#28787e 1px,#28787e 15px);background-position:0 -9px;background-size:2px 15px;"></i>
<i style="left:1369px;top:310px;width:2px;height:583px;background:repeating-linear-gradient(180deg,#359096 0,#359096 1px,#28787e 1px,#28787e 15px);background-position:0 -9px;background-size:2px 15px;"></i>
<i style="left:691px;top:309px;width:1px;height:1px;background:#55c8d0;"></i>
<i style="left:690px;top:309px;width:1px;height:1px;background:#28787e;"></i>
<i style="left:691px;top:308px;width:1px;height:1px;background:#28787e;"></i>
<i style="left:1369px;top:309px;width:1px;height:1px;background:#55c8d0;"></i>
<i style="left:1370px;top:309px;width:1px;height:1px;background:#28787e;"></i>
<i style="left:1369px;top:308px;width:1px;height:1px;background:#28787e;"></i>
<i style="left:691px;top:893px;width:1px;height:1px;background:#55c8d0;"></i>
<i style="left:690px;top:893px;width:1px;height:1px;background:#28787e;"></i>
<i style="left:691px;top:894px;width:1px;height:1px;background:#28787e;"></i>
<i style="left:1369px;top:893px;width:1px;height:1px;background:#55c8d0;"></i>
<i style="left:1370px;top:893px;width:1px;height:1px;background:#28787e;"></i>
<i style="left:1369px;top:894px;width:1px;height:1px;background:#28787e;"></i>
<span class="t" style="left:694px;top:302px;color:#c9c9c9;">Decode throughput over latency</span>
<span class="t b" style="left:694px;top:317px;color:#ffffff;">800.00</span>
<span class="t" style="left:694px;top:452px;color:#c9c9c9;">600.00</span>
<span class="t" style="left:694px;top:587px;color:#c9c9c9;">400.00</span>
<span class="t" style="left:694px;top:722px;color:#c9c9c9;">200.00</span>
<span class="t b" style="left:694px;top:842px;color:#ffffff;">0.00</span>
<i style="left:739px;top:316px;width:2px;height:547px;background:repeating-linear-gradient(180deg,#8e8e8e 0,#8e8e8e 1px,#6a6a6a 1px,#6a6a6a 15px);background-position:0 0px;background-size:2px 15px;"></i>
<i style="left:741px;top:863px;width:625px;height:2px;background:repeating-linear-gradient(90deg,#8e8e8e 0,#8e8e8e 1px,#6a6a6a 1px,#6a6a6a 7px);background-position:-5px 0;background-size:7px 2px;"></i>
<i style="left:740px;top:863px;width:1px;height:1px;background:#cfcfcf;"></i>
<i style="left:739px;top:863px;width:1px;height:1px;background:#6a6a6a;"></i>
<i style="left:740px;top:864px;width:1px;height:1px;background:#6a6a6a;"></i>
<span class="t" style="left:743px;top:317px;color:#4fc4cc;">tokens/secs</span>
<span class="t" style="left:1352px;top:842px;color:#4fc4cc;">ms</span>
<span class="t b" style="left:715px;top:872px;color:#ffffff;">0.00</span>
<span class="t" style="left:904px;top:872px;color:#c9c9c9;">100.00</span>
<span class="t" style="left:1023px;top:872px;color:#c9c9c9;">200.00</span>
<span class="t" style="left:1142px;top:872px;color:#c9c9c9;">300.00</span>
<span class="t b" style="left:1324px;top:872px;color:#ffffff;">400.00</span>
<i style="left:1343px;top:323px;width:19px;height:2px;background:repeating-linear-gradient(90deg,#359096 0,#359096 1px,#28787e 1px,#28787e 7px);background-position:-5px 0;background-size:7px 2px;"></i>
<i style="left:1343px;top:428px;width:19px;height:2px;background:repeating-linear-gradient(90deg,#359096 0,#359096 1px,#28787e 1px,#28787e 7px);background-position:-5px 0;background-size:7px 2px;"></i>
<i style="left:1341px;top:325px;width:2px;height:103px;background:repeating-linear-gradient(180deg,#359096 0,#359096 1px,#28787e 1px,#28787e 15px);background-position:0 -9px;background-size:2px 15px;"></i>
<i style="left:1362px;top:325px;width:2px;height:103px;background:repeating-linear-gradient(180deg,#359096 0,#359096 1px,#28787e 1px,#28787e 15px);background-position:0 -9px;background-size:2px 15px;"></i>
<i style="left:1342px;top:324px;width:1px;height:1px;background:#55c8d0;"></i>
<i style="left:1341px;top:324px;width:1px;height:1px;background:#28787e;"></i>
<i style="left:1342px;top:323px;width:1px;height:1px;background:#28787e;"></i>
<i style="left:1362px;top:324px;width:1px;height:1px;background:#55c8d0;"></i>
<i style="left:1363px;top:324px;width:1px;height:1px;background:#28787e;"></i>
<i style="left:1362px;top:323px;width:1px;height:1px;background:#28787e;"></i>
<i style="left:1342px;top:428px;width:1px;height:1px;background:#55c8d0;"></i>
<i style="left:1341px;top:428px;width:1px;height:1px;background:#28787e;"></i>
<i style="left:1342px;top:429px;width:1px;height:1px;background:#28787e;"></i>
<i style="left:1362px;top:428px;width:1px;height:1px;background:#55c8d0;"></i>
<i style="left:1363px;top:428px;width:1px;height:1px;background:#28787e;"></i>
<i style="left:1362px;top:429px;width:1px;height:1px;background:#28787e;"></i>
<span class="t" style="left:1345px;top:332px;color:#bf3a18;">1</span>
<span class="t" style="left:1345px;top:347px;color:#4ec030;">2</span>
<span class="t" style="left:1345px;top:362px;color:#cbc02e;">4</span>
<span class="t" style="left:1345px;top:377px;color:#2428c8;">8</span>
<span class="t" style="left:1345px;top:392px;color:#c444c8;">16</span>
<span class="t" style="left:1345px;top:407px;color:#50c4cc;">32</span>
<i style="left:1016px;top:818px;width:7px;height:8px;background:#bf3a18;"></i>
<i style="left:1072px;top:803px;width:7px;height:8px;background:#4ec030;"></i>
<i style="left:1086px;top:758px;width:7px;height:8px;background:#cbc02e;"></i>
<i style="left:1114px;top:683px;width:7px;height:8px;background:#2428c8;"></i>
<i style="left:1149px;top:563px;width:7px;height:8px;background:#c444c8;"></i>
<i style="left:1205px;top:353px;width:7px;height:8px;background:#50c4cc;"></i>
</div></body></html>
